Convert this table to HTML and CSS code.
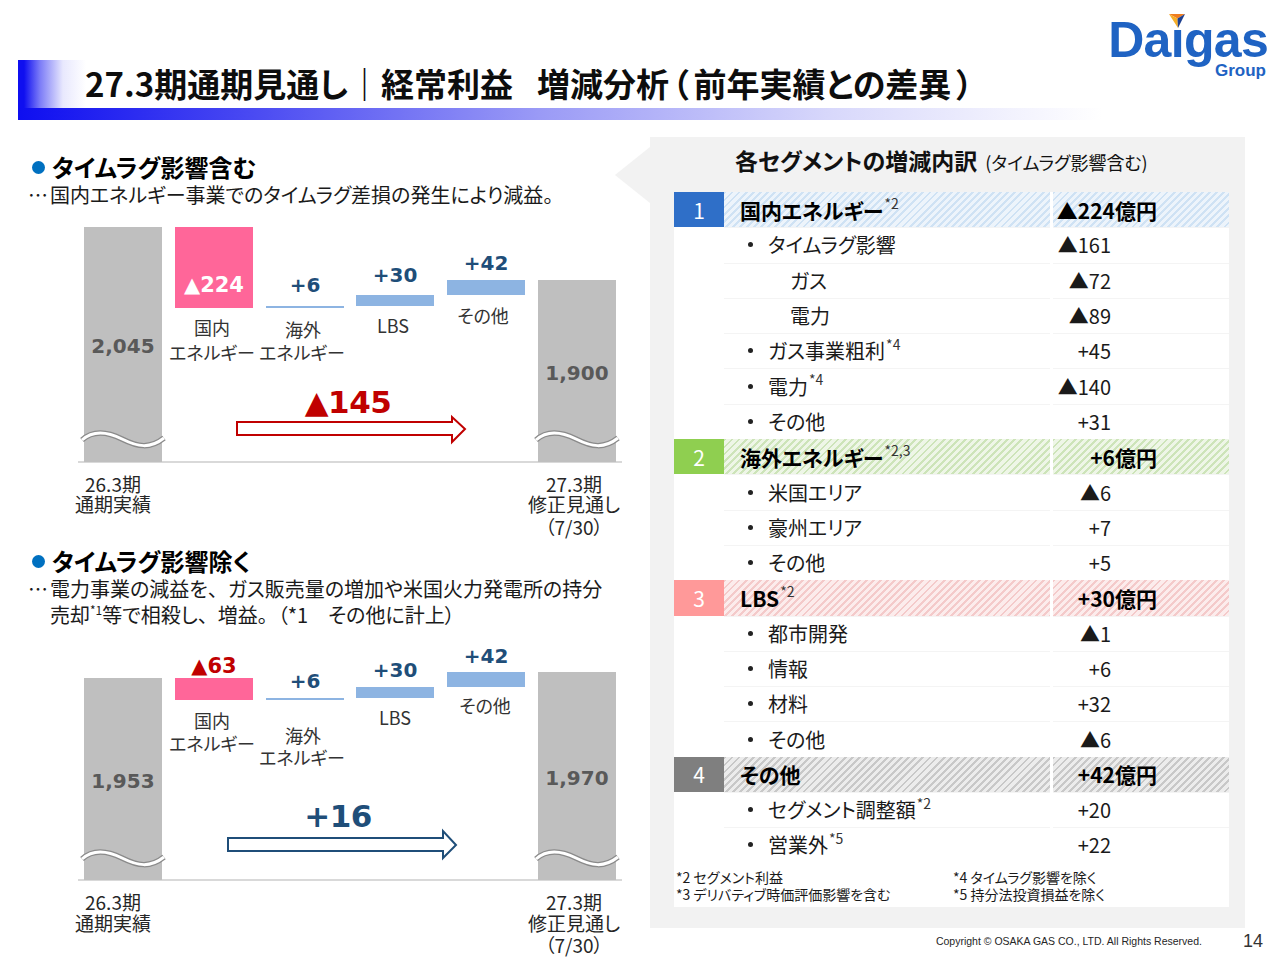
FILE: index.html
```html
<!DOCTYPE html>
<html lang="ja">
<head>
<meta charset="utf-8">
<title>27.3期通期見通し｜経常利益 増減分析</title>
<link rel="stylesheet" href="styles.css">
</head>
<body>
<header class="header">
  <div class="title-band"><h1 class="title">27.3期通期見通し｜経常利益<span class="tgap"></span>増減分析<span class="po">（</span>前年実績との差異<span class="pc">）</span></h1></div>
  <div class="logo">
    <div class="logo-main">Da<span class="logo-i">i</span>gas</div>
    <div class="logo-sub">Group</div>
    <svg class="logo-mark" width="16" height="14" viewBox="0 0 16 14">
      <polygon points="0,0 16,0 8.5,4.5" fill="#ef7d1f"/>
      <polygon points="0,0 8.5,4.5 9,14" fill="#f6ae27"/>
      <polygon points="16,0 8.5,4.5 9,14" fill="#1d3f8e"/>
    </svg>
  </div>
</header>
<main class="main">
  <section class="left">
    <h2 class="bh">タイムラグ影響含む</h2>
    <p class="desc"><span class="ell">…</span>国内エネルギー事業でのタイムラグ差損の発生により減益。</p>
    <svg class="chart" width="620" height="325" viewBox="0 0 620 325">
      <line class="axis" x1="58" y1="247" x2="602" y2="247"/>
      <rect class="bar-total" x="64" y="12" width="78" height="235"/>
      <rect class="bar-total" x="518" y="65" width="78" height="182"/>
      <rect class="bar-neg" x="155" y="12" width="78" height="81"/>
      <rect class="bar-pos" x="246" y="91" width="78" height="2"/>
      <rect class="bar-pos" x="336" y="80" width="78" height="11"/>
      <rect class="bar-pos" x="427" y="65" width="78" height="15"/>
      <g transform="translate(64 225)"><path class="wave-o" d="M-2 0 C 8 -9, 22 -9, 38 -1 S 66 9, 80 -2"/><path class="wave-i" d="M-2 0 C 8 -9, 22 -9, 38 -1 S 66 9, 80 -2"/></g>
      <g transform="translate(518 225)"><path class="wave-o" d="M-2 0 C 8 -9, 22 -9, 38 -1 S 66 9, 80 -2"/><path class="wave-i" d="M-2 0 C 8 -9, 22 -9, 38 -1 S 66 9, 80 -2"/></g>
      <text class="n n-grey" x="103" y="138">2,045</text>
      <text class="n n-grey" x="557" y="165">1,900</text>
      <text class="n n-white" x="194" y="77">▲224</text>
      <text class="n n-blue" x="285" y="77">+6</text>
      <text class="n n-blue" x="375" y="67">+30</text>
      <text class="n n-blue" x="466" y="55">+42</text>
      <text class="lbl" x="192" y="120">国内</text>
      <text class="lbl" x="192" y="145">エネルギー</text>
      <text class="lbl" x="283" y="122">海外</text>
      <text class="lbl" x="282" y="145">エネルギー</text>
      <text class="lbl" x="373" y="118">LBS</text>
      <text class="lbl" x="463" y="108">その他</text>
      <polygon class="arrow-red" points="217,207 432,207 432,202 445,214 432,227 432,220 217,220"/>
      <text class="n n-red big" x="328" y="198">▲145</text>
      <text class="xl" x="93" y="277">26.3期</text>
      <text class="xl" x="93" y="297">通期実績</text>
      <text class="xl" x="554" y="277">27.3期</text>
      <text class="xl" x="554" y="297">修正見通し</text>
      <text class="xl" x="554" y="320">（7/30）</text>
    </svg>
    <h2 class="bh bh2">タイムラグ影響除く</h2>
    <p class="desc"><span class="ell">…</span>電力事業の減益を<span class="fw">、</span>ガス販売量の増加や米国火力発電所の持分<br><span class="ell"></span>売却<sup class="dsup">*1</sup>等で相殺し<span class="fw">、</span>増益<span class="fw">。</span>（*1　その他に計上）</p>
    <svg class="chart" width="620" height="325" viewBox="0 0 620 325">
      <line class="axis" x1="58" y1="245" x2="602" y2="245"/>
      <rect class="bar-total" x="64" y="43" width="78" height="202"/>
      <rect class="bar-total" x="518" y="37" width="78" height="208"/>
      <rect class="bar-neg" x="155" y="43" width="78" height="22"/>
      <rect class="bar-pos" x="246" y="63" width="78" height="2"/>
      <rect class="bar-pos" x="336" y="52" width="78" height="11"/>
      <rect class="bar-pos" x="427" y="37" width="78" height="15"/>
      <g transform="translate(64 224)"><path class="wave-o" d="M-2 0 C 8 -9, 22 -9, 38 -1 S 66 9, 80 -2"/><path class="wave-i" d="M-2 0 C 8 -9, 22 -9, 38 -1 S 66 9, 80 -2"/></g>
      <g transform="translate(518 224)"><path class="wave-o" d="M-2 0 C 8 -9, 22 -9, 38 -1 S 66 9, 80 -2"/><path class="wave-i" d="M-2 0 C 8 -9, 22 -9, 38 -1 S 66 9, 80 -2"/></g>
      <text class="n n-grey" x="103" y="153">1,953</text>
      <text class="n n-grey" x="557" y="150">1,970</text>
      <text class="n n-red" x="194" y="38">▲63</text>
      <text class="n n-blue" x="285" y="53">+6</text>
      <text class="n n-blue" x="375" y="42">+30</text>
      <text class="n n-blue" x="466" y="28">+42</text>
      <text class="lbl" x="192" y="93">国内</text>
      <text class="lbl" x="192" y="116">エネルギー</text>
      <text class="lbl" x="283" y="108">海外</text>
      <text class="lbl" x="282" y="130">エネルギー</text>
      <text class="lbl" x="375" y="90">LBS</text>
      <text class="lbl" x="465" y="78">その他</text>
      <polygon class="arrow-navy" points="208,203 423,203 423,196 436,210 423,223 423,216 208,216"/>
      <text class="n n-blue big" x="318" y="192">+16</text>
      <text class="xl" x="93" y="275">26.3期</text>
      <text class="xl" x="93" y="296">通期実績</text>
      <text class="xl" x="554" y="275">27.3期</text>
      <text class="xl" x="554" y="296">修正見通し</text>
      <text class="xl" x="554" y="318">（7/30）</text>
    </svg>
  </section>

  <section class="right">
    <div class="panel">
      <div class="panel-title"><b>各セグメントの増減内訳</b><span>(タイムラグ影響含む)</span></div>
      <div class="seg-table">
        <div class="row head blue"><div class="no">1</div><div class="name">国内エネルギー<span class="sup">*2</span></div><div class="val">▲224億円</div></div>
        <div class="row sub"><div class="no"></div><div class="name"><span class="dot"></span>タイムラグ影響</div><div class="val">▲161</div></div>
        <div class="row sub sub2"><div class="no"></div><div class="name">ガス</div><div class="val">▲72</div></div>
        <div class="row sub sub2"><div class="no"></div><div class="name">電力</div><div class="val">▲89</div></div>
        <div class="row sub"><div class="no"></div><div class="name"><span class="dot"></span>ガス事業粗利<span class="sup">*4</span></div><div class="val">+45</div></div>
        <div class="row sub"><div class="no"></div><div class="name"><span class="dot"></span>電力<span class="sup">*4</span></div><div class="val">▲140</div></div>
        <div class="row sub"><div class="no"></div><div class="name"><span class="dot"></span>その他</div><div class="val">+31</div></div>

        <div class="row head green"><div class="no">2</div><div class="name">海外エネルギー<span class="sup">*2,3</span></div><div class="val">+6億円</div></div>
        <div class="row sub"><div class="no"></div><div class="name"><span class="dot"></span>米国エリア</div><div class="val">▲6</div></div>
        <div class="row sub"><div class="no"></div><div class="name"><span class="dot"></span>豪州エリア</div><div class="val">+7</div></div>
        <div class="row sub"><div class="no"></div><div class="name"><span class="dot"></span>その他</div><div class="val">+5</div></div>

        <div class="row head pink"><div class="no">3</div><div class="name">LBS<span class="sup">*2</span></div><div class="val">+30億円</div></div>
        <div class="row sub"><div class="no"></div><div class="name"><span class="dot"></span>都市開発</div><div class="val">▲1</div></div>
        <div class="row sub"><div class="no"></div><div class="name"><span class="dot"></span>情報</div><div class="val">+6</div></div>
        <div class="row sub"><div class="no"></div><div class="name"><span class="dot"></span>材料</div><div class="val">+32</div></div>
        <div class="row sub"><div class="no"></div><div class="name"><span class="dot"></span>その他</div><div class="val">▲6</div></div>

        <div class="row head grey"><div class="no">4</div><div class="name">その他</div><div class="val">+42億円</div></div>
        <div class="row sub"><div class="no"></div><div class="name"><span class="dot"></span>セグメント調整額<span class="sup">*2</span></div><div class="val">+20</div></div>
        <div class="row sub"><div class="no"></div><div class="name"><span class="dot"></span>営業外<span class="sup">*5</span></div><div class="val">+22</div></div>

        <div class="notes">
          <div>*2&nbsp;セグメント利益<br>*3&nbsp;デリバティブ時価評価影響を含む</div>
          <div>*4&nbsp;タイムラグ影響を除く<br>*5&nbsp;持分法投資損益を除く</div>
        </div>
      </div>
    </div>
    <footer class="footer">
      <span class="copy">Copyright © OSAKA GAS CO., LTD. All Rights Reserved.</span>
      <span class="page">14</span>
    </footer>
  </section>
</main>
</body>
</html>
```

FILE: styles.css
```css
* { box-sizing: border-box; margin: 0; padding: 0; }
html, body { width: 1280px; height: 960px; }
body {
  overflow: hidden;
  background: #fff;
  color: #000;
  font-family: "Noto Sans CJK JP", "Noto Sans", sans-serif;
  font-feature-settings: "palt";
}

/* header */
.header { display: flex; align-items: flex-start; height: 137px; }
.title-band {
  flex: 0 0 1085px;
  height: 60px;
  margin: 60px 0 0 18px;
  padding: 2px 0 0 67px;
  background:
    linear-gradient(to right, #0f0ff0 0px, #0f0ff0 6px, rgba(80,80,245,0.75) 22px, rgba(190,190,250,0.35) 45px, rgba(255,255,255,0) 68px) left top / 70px 48px no-repeat,
    linear-gradient(to right, #0e0ef0 0%, #4b4bf2 22%, #9a9af6 48%, #d8d8fb 75%, #ffffff 100%) left bottom / 100% 12px no-repeat;
}
.title {
  font-size: 33px;
  font-weight: 700;
  line-height: 42px;
  white-space: nowrap;
  color: #0d0d0d;
}
.tgap { display: inline-block; width: 24px; }
.po { margin-left: 3px; margin-right: 5px; }
.pc { margin-left: 5px; }
.logo {
  position: relative;
  margin: 18px 12px 0 auto;
  display: flex;
  flex-direction: column;
  align-items: flex-end;
  font-family: "Liberation Sans", Arial, sans-serif;
  font-weight: 700;
  color: #1f63c3;
}
.logo-main { font-size: 50px; line-height: 44px; letter-spacing: -0.7px; }
.logo-i { display: inline-block; clip-path: inset(12px 0 0 0); }
.logo-sub { font-size: 17px; line-height: 16px; margin-top: 1px; margin-right: 2px; }
.logo-mark { position: absolute; left: 61px; top: -4px; }

/* main */
.main { display: flex; align-items: flex-start; }
.left { flex: 0 0 610px; min-width: 0; margin-left: 20px; }
.bh {
  display: flex;
  align-items: center;
  height: 30px;
  margin-top: 15px;
  padding-left: 12px;
  font-size: 24px;
  font-weight: 700;
  line-height: 30px;
}
.bh::before {
  content: "";
  flex: 0 0 13px;
  height: 13px;
  margin-right: 7px;
  border-radius: 50%;
  background: #0070c0;
}
.bh2 { margin-top: 6px; }
.desc {
  padding-left: 8px;
  font-size: 20px;
  line-height: 26px;
  white-space: nowrap;
  color: #1a1a1a;
}
.ell { display: inline-block; width: 22px; }
.fw { font-feature-settings: normal; }
.dsup { font-size: 12px; vertical-align: 8px; line-height: 0; }
.chart { display: block; margin-top: 7px; overflow: visible; }

/* chart parts */
.axis { stroke: #d9d9d9; stroke-width: 2; }
.bar-total { fill: #bfbfbf; }
.bar-neg { fill: #ff6699; }
.bar-pos { fill: #8db4e2; }
.wave-o { fill: none; stroke: #8a8a8a; stroke-width: 5.5; }
.wave-i { fill: none; stroke: #ffffff; stroke-width: 3; }
.n {
  font-family: "DejaVu Sans", Verdana, sans-serif;
  font-weight: 700;
  font-size: 20px;
  text-anchor: middle;
}
.n-grey { fill: #595959; }
.n-white { fill: #ffffff; font-size: 21px; }
.n-blue { fill: #1f4e79; }
.n-red { fill: #c00000; font-size: 21px; }
.big { font-size: 31px; letter-spacing: -0.5px; }
.lbl {
  font-family: "Noto Sans CJK JP", sans-serif;
  font-size: 18px;
  fill: #333333;
  text-anchor: middle;
}
.xl {
  font-family: "Noto Sans CJK JP", sans-serif;
  font-size: 19px;
  fill: #262626;
  text-anchor: middle;
}
.arrow-red { fill: #fff; stroke: #c00000; stroke-width: 2; }
.arrow-navy { fill: #fff; stroke: #1f4e79; stroke-width: 2; }

/* right panel */
.right { flex: 0 0 630px; margin-left: 20px; }
.panel {
  position: relative;
  width: 595px;
  height: 791px;
  padding: 8px 0 0 24px;
  background: #f2f2f2;
}
.panel::before {
  content: "";
  position: absolute;
  left: -35px;
  top: 10px;
  width: 0;
  height: 0;
  border-style: solid;
  border-width: 28px 35px 28px 0;
  border-color: transparent #f2f2f2 transparent transparent;
}
.panel-title {
  height: 30px;
  padding-left: 61px;
  line-height: 30px;
  white-space: nowrap;
  color: #111;
}
.panel-title b { font-size: 23px; font-weight: 700; }
.panel-title span { font-size: 18px; margin-left: 8px; }

.seg-table { width: 555px; margin-top: 17px; background: #fff; }
.row {
  display: grid;
  grid-template-columns: 50px 326px 179px;
  height: 35.3px;
  font-size: 20px;
  color: #1a1a1a;
}
.row > div { display: flex; align-items: center; white-space: nowrap; }
.no { justify-content: center; color: #fff; font-size: 21px; }
.name { padding-left: 24px; }
.val { justify-content: flex-end; padding-right: 118px; border-left: 3px solid transparent; background-clip: padding-box; }
.sub .name, .sub .val { box-shadow: inset 0 1px 0 #f4f4f4; }
.sub2 .name { padding-left: 66px; }
.dot {
  display: inline-block;
  width: 5px;
  height: 5px;
  margin-right: 15px;
  border-radius: 50%;
  background: #222;
}
.sup { font-size: 14px; font-weight: 400; color: #333; position: relative; top: -7px; margin-left: 1px; }

.head { font-weight: 700; font-size: 21px; color: #000; }
.head .name { padding-left: 16px; }
.head .val { padding-right: 72px; }
.head .no { font-weight: 400; }
.blue .no { background: #2f6fc8; }
.blue .name, .blue .val { background-image: repeating-linear-gradient(135deg, #cfe2f4 0 2px, #edf4fb 2px 5px); }
.green .no { background: #8fcf50; }
.green .name, .green .val { background-image: repeating-linear-gradient(135deg, #cde4b9 0 2px, #eef6e7 2px 5px); }
.pink .no { background: #ff9999; }
.pink .name, .pink .val { background-image: repeating-linear-gradient(135deg, #f4caca 0 2px, #fcecec 2px 5px); }
.grey .no { background: #7f7f7f; }
.grey .name, .grey .val { background-image: repeating-linear-gradient(135deg, #c8c8c8 0 2px, #ececec 2px 5px); }

.notes {
  display: grid;
  grid-template-columns: 277px 1fr;
  height: 44.3px;
  padding: 6px 0 0 2px;
  font-size: 14px;
  line-height: 17px;
  color: #1a1a1a;
  white-space: nowrap;
}

.footer {
  display: flex;
  align-items: center;
  justify-content: flex-end;
  height: 26px;
  padding-right: 17px;
}
.copy { font-family: "Liberation Sans", Arial, sans-serif; font-size: 10.5px; color: #262626; }
.page { margin-left: 41px; font-family: "Liberation Sans", Arial, sans-serif; font-size: 18px; color: #333; }
```
